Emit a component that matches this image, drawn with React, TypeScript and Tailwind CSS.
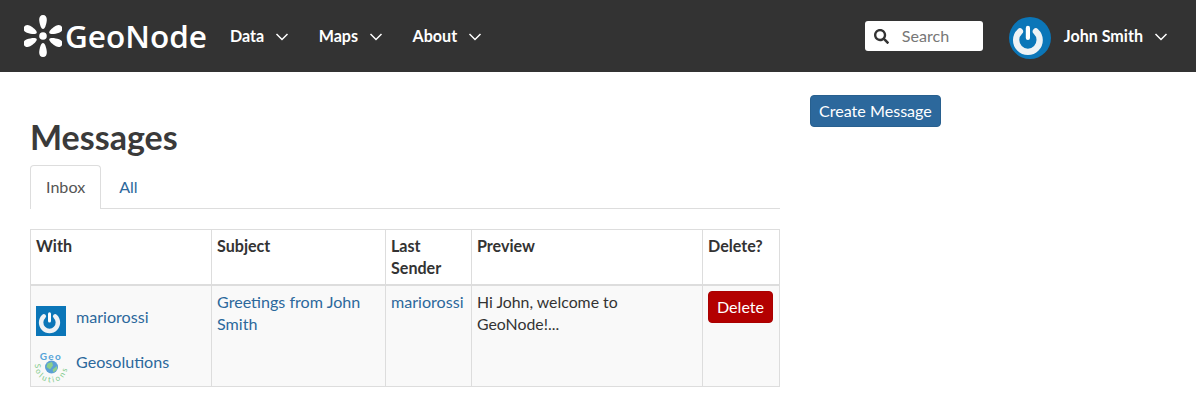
import { FaSearch } from 'react-icons/fa';

function Chevron() {
  return (
    <svg width="14" height="8" viewBox="0 0 14 8" fill="none" stroke="currentColor" strokeWidth="1.5" className="ml-[11px] mt-[1px]">
      <path d="M1.5 1 L7 6.5 L12.5 1" />
    </svg>
  );
}

function NavItem({ label }: { label: string }) {
  return (
    <a className="flex items-center font-bold text-white text-[16.1px] mr-[29.5px] last:mr-0">
      {label}
      <Chevron />
    </a>
  );
}

const petal = 'M19 0 C21.5 0 23 2 22.8 5 C22.5 9 21 14 19 14 C17 14 15.5 9 15.2 5 C15 2 16.5 0 19 0 Z';

function GeoNodeMark() {
  return (
    <svg width="38" height="42" viewBox="0 0 38 42" fill="white" className="shrink-0">
      <circle cx="19" cy="21" r="3.8" />
      <path d={petal} />
      <path d={petal} transform="rotate(65 19 21)" />
      <path d={petal} transform="rotate(115 19 21)" />
      <path d={petal} transform="rotate(180 19 21)" />
      <path d={petal} transform="rotate(245 19 21)" />
      <path d={petal} transform="rotate(295 19 21)" />
    </svg>
  );
}

function PowerGlyph() {
  return (
    <>
      <path d="M13 17.2 A14 14 0 1 0 32 17.2" fill="none" stroke="#eef2f5" strokeWidth="7.5" strokeLinecap="round" />
      <path d="M22.5 13 V25" stroke="#fff" strokeWidth="5" strokeLinecap="round" />
    </>
  );
}

function GeosolutionsLogo() {
  return (
    <svg width="30" height="30" viewBox="0 0 30 30" className="shrink-0 overflow-visible">
      <defs>
        <path id="solArc" d="M-1 13 A16 16 0 0 0 31.5 17" />
      </defs>
      <text x="15" y="8.5" textAnchor="middle" fontSize="10" fontFamily="Lato, sans-serif" fontWeight="700" letterSpacing="1.4" fill="#55a3d8">Geo</text>
      <circle cx="15.5" cy="16" r="6.5" fill="#5b9fd6" />
      <path d="M11.5 12.5 L16 11 L17 14.5 L14 18.5 L10.5 16 Z" fill="#8ccf8c" />
      <path d="M16.5 18.5 L21 15 L21 18.5 L17.5 21.5 Z" fill="#8ccf8c" />
      <text fontSize="8" fontFamily="Lato, sans-serif" letterSpacing="2.2" fill="#7fcb8b">
        <textPath href="#solArc">Solutions</textPath>
      </text>
    </svg>
  );
}

const linkClass = 'text-[#2c689c]';
const thClass = 'border border-[#ddd] border-b-2 p-[5px] text-left align-top font-bold';
const tdClass = 'border border-[#ddd] p-[5px] align-top';

export default function App() {
  return (
    <div className="min-h-[409px] bg-white font-['Lato','Liberation_Sans',sans-serif] text-[16.1px] leading-[22px] text-[#333]">
      <nav className="flex h-[72px] items-center bg-[#333] pl-[24px] pr-[28px]">
        <GeoNodeMark />
        <span className="ml-[3px] mr-[23px] font-['Open_Sans',sans-serif] text-[31.5px] leading-none font-semibold text-white">GeoNode</span>
        <NavItem label="Data" />
        <NavItem label="Maps" />
        <NavItem label="About" />
        <div className="ml-auto flex h-[30px] w-[118px] items-center rounded-[3px] bg-white pl-[9px]">
          <FaSearch className="h-[15px] w-[15px] text-[#333]" />
          <span className="ml-[13px] text-[#777]">Search</span>
        </div>
        <svg width="42" height="42" viewBox="0 0 50 50" className="ml-[26px] mt-[4px] shrink-0">
          <circle cx="25" cy="25" r="25" fill="#0b76b8" />
          <PowerGlyph />
        </svg>
        <span className="ml-[13px] flex items-center font-bold text-white">
          John Smith
          <Chevron />
        </span>
      </nav>

      <div className="flex pl-[30px]">
        <main className="w-[750px]">
          <h1 className="mt-[45px] text-[34px] leading-[40px] font-bold text-[#3a3a3a]">Messages</h1>
          <div className="mt-[8px] flex h-[44px] border-b border-[#ddd]">
            <a className="h-[44px] rounded-t-[4px] border border-b-0 border-[#ddd] bg-white px-[15px] pt-[10px] text-[#555]">Inbox</a>
            <a className={`px-[18px] pt-[11px] ${linkClass}`}>All</a>
          </div>
          <table className="mt-[20px] w-[749px] table-fixed border-collapse">
            <colgroup>
              <col className="w-[181px]" />
              <col className="w-[174px]" />
              <col className="w-[86px]" />
              <col className="w-[231px]" />
              <col className="w-[77px]" />
            </colgroup>
            <thead>
              <tr>
                <th className={thClass}>With</th>
                <th className={thClass}>Subject</th>
                <th className={thClass}>Last Sender</th>
                <th className={thClass}>Preview</th>
                <th className={thClass}>Delete?</th>
              </tr>
            </thead>
            <tbody className="bg-[#f9f9f9]">
              <tr>
                <td className={tdClass}>
                  <div className="mt-[15px] flex items-start">
                    <svg width="30" height="30" viewBox="0 0 50 50" className="shrink-0">
                      <rect width="50" height="50" fill="#0b76b8" />
                      <PowerGlyph />
                    </svg>
                    <a className={`ml-[10px] ${linkClass}`}>mariorossi</a>
                  </div>
                  <div className="mt-[15px] flex items-start">
                    <GeosolutionsLogo />
                    <a className={`ml-[10px] ${linkClass}`}>Geosolutions</a>
                  </div>
                </td>
                <td className={tdClass}><a className={linkClass}>Greetings from John Smith</a></td>
                <td className={tdClass}><a className={linkClass}>mariorossi</a></td>
                <td className={`${tdClass} text-[15.85px]`}>Hi John, welcome to GeoNode!...</td>
                <td className={tdClass}>
                  <button className="h-[32px] w-[65px] rounded-[4px] border border-[#a00] bg-[#b30000] text-white">Delete</button>
                </td>
              </tr>
            </tbody>
          </table>
        </main>
        <aside className="ml-[30px] pt-[23px]">
          <button className="h-[32px] rounded-[4px] border border-[#28608f] bg-[#2c689c] px-[8px] text-white">Create Message</button>
        </aside>
      </div>
    </div>
  );
}
